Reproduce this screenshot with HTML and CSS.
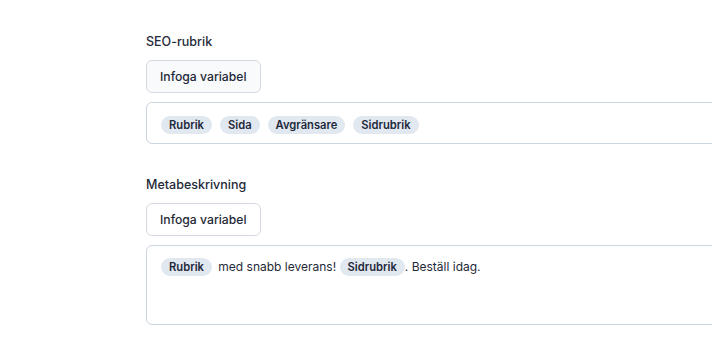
FILE: index.html
```html
<!DOCTYPE html>
<html lang="sv">
<head>
  <meta charset="UTF-8">
  <meta name="viewport" content="width=device-width, initial-scale=1.0">
  <title>SEO-inställningar</title>
  <link rel="stylesheet" href="styles.css">
</head>
<body>
  <div class="seo-wrapper">
    <!-- SEO title -->
    <div class="field">
      <label class="field-label">SEO-rubrik</label>
      <button class="btn btn-insert btn-hover">Infoga variabel</button>
      <div class="editor editor-single">
        <span class="chip">Rubrik</span>
        <span class="chip">Sida</span>
        <span class="chip">Avgränsare</span>
        <span class="chip">Sidrubrik</span>
      </div>
    </div>

    <!-- Meta description -->
    <div class="field">
      <label class="field-label">Metabeskrivning</label>
      <button class="btn btn-insert">Infoga variabel</button>
      <div class="editor editor-multi">
        <span class="chip chip-first">Rubrik</span> med snabb leverans! <span class="chip">Sidrubrik</span>. Beställ idag.
      </div>
    </div>
  </div>
</body>
</html>
```

FILE: styles.css
```css
/* General Reset */
* {
  margin: 0;
  padding: 0;
  box-sizing: border-box;
  font-family: 'Inter', 'Segoe UI', sans-serif;
}

body {
  background: #ffffff;
  overflow: hidden;
}

.seo-wrapper {
  width: 640px;
  margin-left: 146px;
  padding-top: 33px;
}

.field {
  display: flex;
  flex-direction: column;
  align-items: flex-start;
  margin-bottom: 32px;
}

.field-label {
  font-size: 12.5px;
  font-weight: 500;
  line-height: 18px;
  color: #1f2937;
  margin-bottom: 9px;
}

.btn {
  height: 33px;
  padding: 0 13px;
  font-size: 12.2px;
  font-weight: 500;
  color: #1f2937;
  background: white;
  border: 1px solid #d4d9e1;
  border-radius: 6px;
  cursor: pointer;
}

.btn-hover {
  background: #f8fafc;
}

.editor {
  width: 100%;
  margin-top: 9px;
  border: 1px solid #cbd5e1;
  border-radius: 6px;
  padding: 11px 14px;
  font-size: 12px;
  line-height: 20px;
  color: #1f2937;
}

.editor-single {
  height: 42px;
  padding-top: 13px;
  padding-bottom: 9px;
  display: flex;
  align-items: center;
  gap: 8px;
}

.editor-multi {
  height: 80px;
}

.chip {
  display: inline-block;
  background: #e2e8f0;
  border-radius: 9px;
  padding: 0 8px;
  height: 18px;
  line-height: 18px;
  font-size: 11.2px;
  font-weight: 600;
  color: #1e293b;
}

.chip-first {
  margin-right: 3px;
}
```
